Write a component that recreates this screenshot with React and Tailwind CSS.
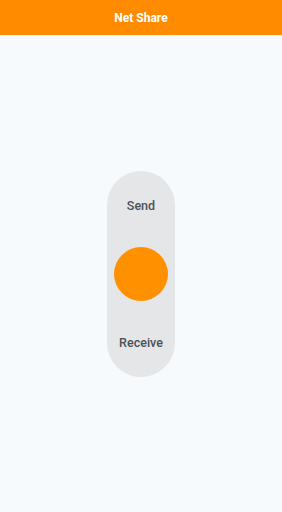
import React from 'react';

const App = () => {
  return (
    <div className="min-h-screen bg-[#f7fafc] font-['Roboto',sans-serif]">
      {/* Header */}
      <div className="h-[35px] bg-[#ff8c00] flex items-center justify-center">
        <h1 className="text-[12px] font-bold text-white">Net Share</h1>
      </div>

      {/* Toggle */}
      <div className="h-[477px] flex items-center justify-center">
        <div className="w-[68px] h-[206px] rounded-full bg-[#e4e6e8] flex flex-col items-center justify-between pt-[27px] pb-[26px]">
          <span className="text-[12.5px] leading-[16px] font-medium text-[#4b5058]">Send</span>
          <div className="w-[54px] h-[54px] rounded-full bg-[#ff9000]"></div>
          <span className="text-[12.5px] leading-[16px] font-medium text-[#4b5058]">Receive</span>
        </div>
      </div>
    </div>
  );
};

export default App;
